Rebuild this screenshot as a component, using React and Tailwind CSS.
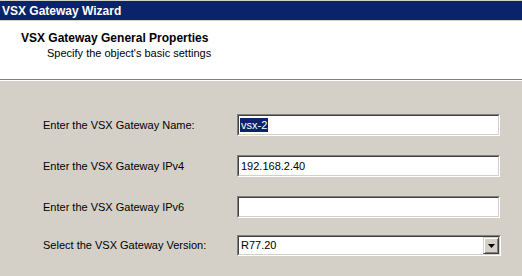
import React from 'react';

const fields = [
  { id: 'name', label: 'Enter the VSX Gateway Name:', value: 'vsx-2', selected: true },
  { id: 'ipv4', label: 'Enter the VSX Gateway IPv4', value: '192.168.2.40' },
  { id: 'ipv6', label: 'Enter the VSX Gateway IPv6', value: '' },
];

// classic sunken edit box
const SunkenBox = ({ children }) => (
  <div className="h-[22px] w-[263px] border border-t-[#808080] border-l-[#808080] border-b-white border-r-white">
    <div className="h-full w-full bg-white border border-t-[#404040] border-l-[#404040] border-b-[#d4d0c8] border-r-[#d4d0c8] flex items-center">
      {children}
    </div>
  </div>
);

const App = () => {
  return (
    <div className="w-[522px] h-[276px] overflow-hidden bg-[#d4d0c8] flex flex-col text-[11px] text-black" style={{ fontFamily: '"Liberation Sans", Arial, sans-serif' }}>
      {/* title bar */}
      <div className="mt-px h-[19px] bg-[#0a246a] flex items-center pl-[2px]">
        <span className="text-white font-bold text-[12px]">VSX Gateway Wizard</span>
      </div>

      {/* header */}
      <div className="h-[60px] bg-white border-t border-t-[#d4d0c8] border-b border-b-[#808080] pl-[21px] pt-[10px]">
        <div className="font-bold text-[12px] leading-[14px]">VSX Gateway General Properties</div>
        <div className="pl-[26px] mt-[2px] leading-[13px]">Specify the object's basic settings</div>
      </div>
      <div className="h-px bg-white" />

      {/* body */}
      <div className="flex flex-col gap-[19px] pt-[33px]">
        {fields.map((f) => (
          <div key={f.id} className="flex items-center">
            <span className="w-[237px] shrink-0 pl-[43px] whitespace-nowrap">{f.label}</span>
            <SunkenBox>
              <span className={`ml-[1px] px-px leading-[14px] ${f.selected ? 'bg-[#0a246a] text-white' : ''}`}>{f.value}</span>
            </SunkenBox>
          </div>
        ))}
        <div className="flex items-center -mt-[2px]">
          <span className="w-[237px] shrink-0 pl-[43px] whitespace-nowrap">Select the VSX Gateway Version:</span>
          <div className="h-[21px] w-[264px] border border-t-[#808080] border-l-[#808080] border-b-white border-r-white">
            <div className="h-full w-full bg-white border border-t-[#404040] border-l-[#404040] border-b-[#d4d0c8] border-r-[#d4d0c8] flex items-center justify-between">
              <span className="ml-[2px]">R77.20</span>
              <div className="h-[17px] w-[16px] bg-[#d4d0c8] border border-t-[#d4d0c8] border-l-[#d4d0c8] border-b-[#404040] border-r-[#404040] shadow-[inset_1px_1px_0_#ffffff,inset_-1px_-1px_0_#808080] flex items-center justify-center">
                <svg width="7" height="4" viewBox="0 0 7 4">
                  <path d="M0 0h7L3.5 4z" fill="#000" />
                </svg>
              </div>
            </div>
          </div>
        </div>
      </div>
    </div>
  );
};

export default App;
